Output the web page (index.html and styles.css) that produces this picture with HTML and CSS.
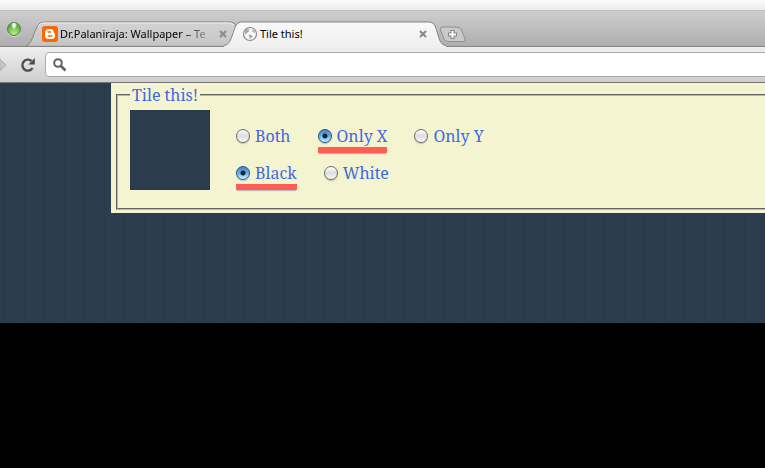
FILE: index.html
```html
<!DOCTYPE html>
<html lang="en">
<head>
<meta charset="utf-8">
<title>Tile this!</title>
<link rel="stylesheet" href="styles.css">
</head>
<body>
<header class="browser">
  <div class="titlebar"></div>
  <div class="strip">
    <button class="light" aria-label="Zoom window"></button>
    <div class="tab tab-back">
      <svg class="shape" viewBox="0 0 216 26" aria-hidden="true">
        <defs><linearGradient id="back" x2="0" y2="1"><stop stop-color="#d4d4d4"/><stop offset="1" stop-color="#c5c5c5"/></linearGradient></defs>
        <path d="M0 24.500C8 24 8 1 17 1H203C212 1 210 24.500 205 24.500Z" fill="url(#back)"/>
        <path d="M0 24.500C8 24 8 1 17 1H203C207 1 209 2 211 6" fill="none" stroke="#858585"/>
        <path d="M12 5Q14 2 17 2H203Q206 2 208 4" fill="none" stroke="#eee"/>
      </svg>
      <svg class="icon" width="16" height="16" viewBox="0 0 16 16" aria-hidden="true">
        <rect width="16" height="16" rx="3" fill="#f60"/>
        <path d="M6.500 3H8.500Q11.500 3 11.500 6Q11.500 7 12.300 7Q13 7.200 13 8V9.500Q13 13 9.500 13H6.500Q3 13 3 9.500V6.500Q3 3 6.500 3Z" fill="#fff"/>
        <path d="M6.300 6H8.500M6.300 10H9.800" stroke="#f60" stroke-width="1.500" stroke-linecap="round"/>
      </svg>
      <span class="name fade">Dr.Palaniraja: Wallpaper – Te</span>
      <button class="close" aria-label="Close tab"><svg width="8" height="8" viewBox="0 0 8 8"><path d="M1 1L7 7M7 1L1 7" stroke="#8c8c8c" stroke-width="2.200"/></svg></button>
    </div>
    <div class="tab tab-front">
      <svg class="shape" viewBox="0 0 216 26" aria-hidden="true">
        <defs><linearGradient id="front" x2="0" y2="1"><stop stop-color="#f9f9f9"/><stop offset="1" stop-color="#efefef"/></linearGradient></defs>
        <path d="M-6 26V24.500C4 24 2 1 11 1H200C209 1 206 24.500 216 24.500V26Z" fill="url(#front)"/>
        <path d="M-6 24.500C4 24 2 1 11 1H200C209 1 206 24.500 216 24.500" fill="none" stroke="#858585"/>
      </svg>
      <svg class="icon" width="16" height="16" viewBox="0 0 16 16" aria-hidden="true">
        <circle cx="8" cy="8" r="6.500" fill="#fafafa" stroke="#8a8a8a" stroke-width="1.200"/>
        <path d="M3 5L5 3L7.500 2.600L6.500 4L7.500 5L6 6.200L5 6.200L5.500 7.500L4.500 7.200L4 8.500L3 7.500ZM10.500 3.500L12.500 5L13 6.800L11 6.200L10.200 5ZM7.500 8.800L10 9.200L10.800 10.500L9 12L8.500 13.500L7.500 12.500L7.500 11L6.500 9.800Z" fill="#a6a6a6"/>
      </svg>
      <span class="name">Tile this!</span>
      <button class="close" aria-label="Close tab"><svg width="8" height="8" viewBox="0 0 8 8"><path d="M1 1L7 7M7 1L1 7" stroke="#8c8c8c" stroke-width="2.200"/></svg></button>
    </div>
    <button class="add" aria-label="New tab"><svg width="27" height="17" viewBox="0 0 27 17">
      <path d="M3.500 1H17Q21 1 22.500 4L26 13Q26.500 15.500 24 15.500H9.500Q6 15.500 5 13L1.500 4Q.500 1 3.500 1Z" fill="#c9c9c9" stroke="#8f8f8f"/>
      <path d="M13.500 4V13M9 8.500H18" stroke="#858585" stroke-width="4"/>
      <path d="M13.500 5V12M10 8.500H17" stroke="#fff" stroke-width="2"/>
    </svg></button>
  </div>
  <div class="toolbar">
    <svg class="forward" width="7" height="12" viewBox="0 0 7 12" aria-hidden="true"><path d="M0 0L6 6L0 12Z" fill="#c4c4c4" stroke="#b0b0b0"/></svg>
    <button class="reload" aria-label="Reload"><svg width="16" height="16" viewBox="0 0 16 16">
      <path d="M12.600 11A5.500 5.500 0 1 1 11.500 4" fill="none" stroke="#4f4f4f" stroke-width="2.400"/>
      <path d="M14.800 1V7.500H8.300Z" fill="#4f4f4f"/>
    </svg></button>
    <div class="omnibox">
      <svg width="14" height="14" viewBox="0 0 14 14" aria-hidden="true"><circle cx="5" cy="5" r="3.800" fill="none" stroke="#626262" stroke-width="2"/><path d="M8 8L12.500 12.500" stroke="#626262" stroke-width="2.600"/></svg>
      <input type="text" aria-label="Address">
    </div>
  </div>
</header>
<main class="page">
  <form class="panel">
    <fieldset>
      <legend>Tile this!</legend>
      <div class="content">
        <div class="swatch"></div>
        <div class="choices">
          <div class="row">
            <label><input type="radio" name="axis">Both</label>
            <label><input type="radio" name="axis" checked>Only X</label>
            <label><input type="radio" name="axis">Only Y</label>
          </div>
          <div class="row">
            <label><input type="radio" name="shade" checked>Black</label>
            <label><input type="radio" name="shade">White</label>
          </div>
        </div>
      </div>
    </fieldset>
  </form>
</main>
</body>
</html>
```

FILE: styles.css
```css
* { box-sizing: border-box; }
body {
  margin: 0;
  background: #000;
  font: 16px/20px Georgia, "Noto Serif", "Droid Serif", "Liberation Serif", serif;
  overflow-x: hidden;
}
button { padding: 0; border: 0; background: none; }
svg { display: block; }

.browser { font: 11px/16px "Lucida Grande", "Noto Sans", sans-serif; color: #000; }
.titlebar {
  height: 11px;
  background: linear-gradient(#fafafa, #ececec);
  border-bottom: 1px solid #c0c0c0;
}
.strip {
  display: flex;
  align-items: flex-end;
  height: 36px;
  padding-left: 7px;
  background: linear-gradient(#cecece, #adadad);
  box-shadow: inset 0 -1px #858585;
}
.light {
  flex: none;
  width: 14px;
  height: 14px;
  margin: 0 5px 11px 0;
  border: 1px solid #557b48;
  border-radius: 50%;
  background: radial-gradient(ellipse at 50% 15%, #f4ffeb 0 12%, transparent 35%), radial-gradient(circle at 50% 90%, #b9f08c, #5cae3c 70%);
  box-shadow: 0 1px #ddd;
}
.tab {
  position: relative;
  display: flex;
  align-items: center;
  flex: none;
  height: 26px;
}
.tab-back { width: 204px; padding: 0 3px 0 16px; }
.tab-front { width: 210px; padding: 0 13px 0 12px; }
.shape {
  position: absolute;
  left: 0;
  top: 0;
  width: 216px;
  height: 26px;
  overflow: visible;
}
.icon, .name, .close { position: relative; }
.icon { flex: none; margin-right: 2px; }
.name { flex: 1; overflow: hidden; white-space: nowrap; }
.fade {
  -webkit-mask-image: linear-gradient(90deg, #000 80%, transparent);
  mask-image: linear-gradient(90deg, #000 80%, transparent);
}
.close { flex: none; margin-left: 5px; }
.add { flex: none; margin: 0 0 4px -1px; position: relative; }
.toolbar {
  display: flex;
  align-items: center;
  height: 36px;
  background: linear-gradient(#efefef, #cecece);
  border-bottom: 1px solid #777;
}
.forward { flex: none; }
.reload { flex: none; margin: 0 9px 0 13px; }
.omnibox {
  display: flex;
  align-items: center;
  flex: 1;
  height: 25px;
  margin-right: -5px;
  padding-left: 7px;
  border: 1px solid #aaa;
  border-radius: 4px;
  background: #fff;
}
.omnibox input { flex: 1; min-width: 0; border: 0; outline: 0; background: none; }

.page {
  min-height: 240px;
  padding-left: 111px;
  background:
    repeating-linear-gradient(90deg, #0000000c 0 1px, transparent 1px 10px) 4px 0,
    repeating-linear-gradient(#0000000c 0 1px, transparent 1px 10px) 0 3px,
    #2b3d4f;
}
.panel { margin-right: -20px; padding: 2px 5px 3px; background: #f4f4d1; }
fieldset {
  margin: 0;
  padding: 5px 12px 18px;
  border: 2px groove #b9b5b9;
  color: #4169e1;
}
legend { padding: 0 2px; }
.content { display: flex; gap: 26px; }
.swatch { flex: none; width: 80px; height: 80px; background: #2b3c4d; }
.choices { display: flex; flex-direction: column; gap: 9px; padding-top: 15px; }
.row { display: flex; gap: 27px; }
label {
  display: flex;
  align-items: center;
  gap: 5px;
  height: 28px;
  border-bottom: 6px solid transparent;
  white-space: nowrap;
}
label:has(:checked) { border-color: #ff5f53; box-shadow: 0 2px 1px -1px #bbb; }
label input {
  appearance: none;
  flex: none;
  width: 14px;
  height: 14px;
  margin: 0;
  border: 1px solid #6d6d68;
  border-radius: 50%;
  background: linear-gradient(#fff, #ddd 50%, #fafafa);
  box-shadow: 0 1px 1px #bbb;
}
label input:checked {
  border-color: #285381;
  background: radial-gradient(circle, #10263a 0 2px, transparent 3px), linear-gradient(#4b83c3, #65aee8 50%, #c8f3ff);
}
```
